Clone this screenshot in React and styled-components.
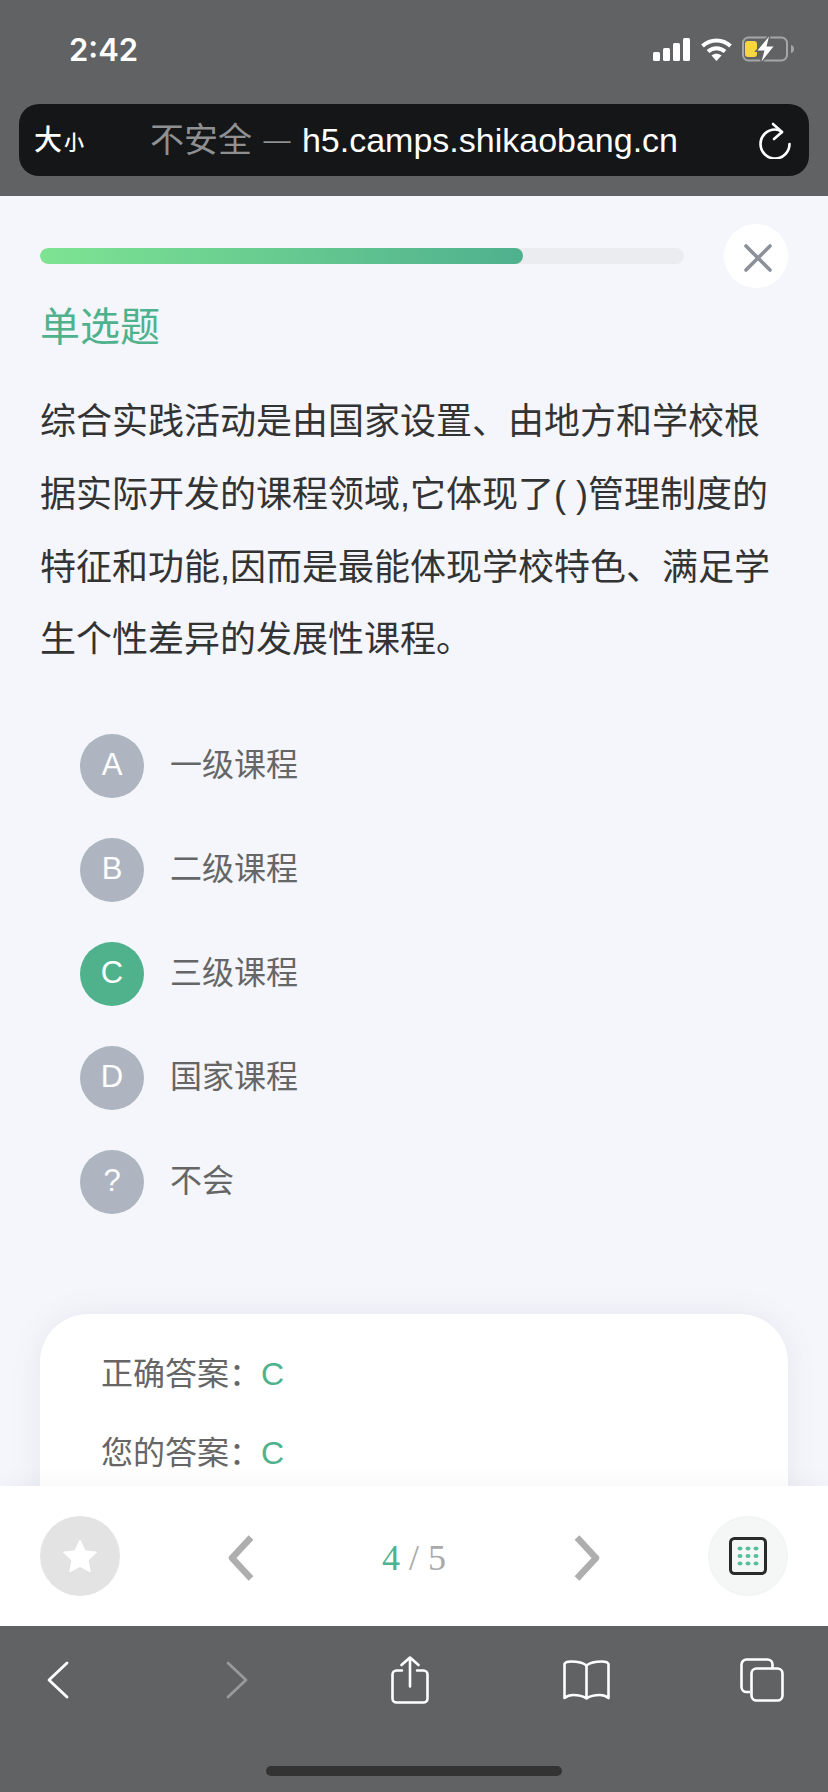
import React from "react";
import styled, { createGlobalStyle } from "styled-components";

const CJK = `"Liberation Sans", "Noto Sans CJK SC", sans-serif`;

const Global = createGlobalStyle`
  html, body { margin: 0; padding: 0; background: #616264; }
  * { box-sizing: border-box; }
`;

const Screen = styled.div`
  width: 828px;
  height: 1792px;
  display: flex;
  flex-direction: column;
  overflow: hidden;
  font-family: ${CJK};
`;

const BrowserTop = styled.header`
  height: 196px;
  flex: none;
  background: #616264;
  padding: 0 19px;
  display: flex;
  flex-direction: column;
`;

const StatusBar = styled.div`
  height: 104px;
  display: flex;
  justify-content: space-between;
  align-items: flex-start;
  padding: 30px 15px 0 50px;
`;

const Clock = styled.span`
  font-family: Inter, sans-serif;
  font-weight: 600;
  font-size: 31px;
  line-height: 38px;
  margin-top: 1px;
  color: #fff;
`;

const StatusIcons = styled.div`
  display: flex;
  align-items: center;
  gap: 10.5px;
  height: 38px;
`;

const AddressBar = styled.div`
  height: 72px;
  border-radius: 20px;
  background: #151618;
  display: flex;
  align-items: center;
  padding: 0 18px 0 15px;
`;

const TextSize = styled.div`
  width: 116px;
  flex: none;
  color: #fff;
  font-size: 28px;
  font-weight: 500;
  padding-bottom: 4px;
  display: flex;
  align-items: baseline;
  & small { font-size: 20px; margin-left: 2px; font-weight: 500; }
`;

const Url = styled.div`
  flex: 1;
  font-size: 34px;
  padding-bottom: 6px;
  color: #fff;
  white-space: nowrap;
`;

const UrlMuted = styled.span`
  color: #8f9092;
`;

const UrlDash = styled.span`
  font-size: 27px;
  margin: 0 2px;
  vertical-align: 3px;
`;

const Page = styled.main`
  flex: 1;
  min-height: 0;
  background: #f4f6fb;
  overflow: hidden;
  padding: 28px 40px 0;
`;

const ProgressRow = styled.div`
  display: flex;
  align-items: center;
  justify-content: space-between;
  height: 64px;
`;

const ProgressTrack = styled.div`
  width: 644px;
  height: 16px;
  border-radius: 8px;
  background: #ebecef;
  overflow: hidden;
`;

const ProgressFill = styled.div`
  height: 100%;
  border-radius: 8px;
  background: linear-gradient(90deg, #7ee492, #4fb08e);
`;

const CloseButton = styled.button`
  width: 64px;
  height: 64px;
  padding: 3px 0 0 4px;
  border: 0;
  border-radius: 50%;
  background: #fff;
  display: flex;
  align-items: center;
  justify-content: center;
`;

const QuestionType = styled.div`
  margin-top: 14px;
  font-size: 40px;
  line-height: 50px;
  color: #4fb28c;
`;

const QuestionText = styled.p`
  margin: 34px 0 0;
  width: 740px;
  font-size: 36px;
  line-height: 72.8px;
  color: #333;
`;

const Options = styled.ul`
  list-style: none;
  margin: 56.800px 0 0;
  padding: 0 0 0 40px;
  display: flex;
  flex-direction: column;
  gap: 40px;
`;

const Option = styled.li`
  height: 64px;
  display: flex;
  align-items: center;
  gap: 26px;
`;

const OptionBadge = styled.span`
  width: 64px;
  height: 64px;
  padding-bottom: 2px;
  border-radius: 50%;
  flex: none;
  display: flex;
  align-items: center;
  justify-content: center;
  color: #fff;
  font-size: 31px;
  background: ${(p) => (p.$active ? "#4fb28c" : "#aeb5c1")};
`;

const OptionText = styled.span`
  font-size: 32px;
  padding-bottom: 7px;
  color: #666;
`;

const AnswerCard = styled.section`
  margin-top: 100px;
  height: 300px;
  background: #fff;
  border-radius: 48px 48px 0 0;
  box-shadow: 0 0 30px rgba(100, 110, 140, 0.1);
  padding: 40px 61px;
  display: flex;
  flex-direction: column;
  gap: 39px;
`;

const AnswerRow = styled.div`
  font-size: 32px;
  line-height: 40px;
  color: #666;
  display: flex;
`;

const AnswerValue = styled.span`
  color: #4fb28c;
`;

const QuizBar = styled.nav`
  position: relative;
  height: 140px;
  flex: none;
  background: #fff;
  padding: 0 40px;
  display: flex;
  align-items: center;
  justify-content: space-between;
  box-shadow: 0 -6px 20px rgba(0, 0, 0, 0.03);
`;

const RoundButton = styled.button`
  width: 80px;
  height: 80px;
  padding: 0;
  border-radius: 50%;
  border: ${(p) => (p.$light ? "1px solid #f0f2f2" : "0")};
  background: ${(p) => (p.$light ? "#f5f6f6" : "#e3e3e3")};
  display: flex;
  align-items: center;
  justify-content: center;
`;

const Pager = styled.div`
  display: flex;
  align-items: center;
  width: 372px;
  margin-top: 3px;
  justify-content: space-between;
`;

const PageCount = styled.div`
  font-family: "Liberation Serif", serif;
  font-size: 36px;
  color: #aaa;
`;

const PageCurrent = styled.span`
  color: #4fb28c;
`;

const BrowserBottom = styled.footer`
  height: 166px;
  flex: none;
  background: #616264;
  position: relative;
  display: flex;
  align-items: flex-start;
  justify-content: space-between;
  padding: 27px 8px 0 0;
`;

const ToolSlot = styled.div`
  width: 116px;
  height: 54px;
  padding-left: ${(p) => p.$inset || 0}px;
  display: flex;
  align-items: center;
  justify-content: center;
`;

const HomeIndicator = styled.div`
  position: absolute;
  left: 266px;
  bottom: 16px;
  width: 296px;
  height: 10px;
  border-radius: 5px;
  background: #333;
`;

const Signal = () => (
  <svg width="37" height="23" viewBox="0 0 37 23" fill="#fff">
    <rect x="0" y="14" width="7" height="9" rx="1.500" />
    <rect x="10" y="10" width="7" height="13" rx="1.500" />
    <rect x="20" y="5" width="7" height="18" rx="1.500" />
    <rect x="30" y="0" width="7" height="23" rx="1.500" />
  </svg>
);

const Wifi = () => (
  <svg width="31" height="23" viewBox="0 0 31 23" fill="none" stroke="#fff" strokeWidth="4">
    <path d="M1.500 8C9.500 .5 21.500 .5 29.500 8" />
    <path d="M7 13.500c5-4.500 12-4.500 17 0" />
    <path d="M15.500 23l-5-5.500c3-2.500 7-2.500 10 0z" fill="#fff" stroke="none" />
  </svg>
);

const Battery = () => (
  <svg width="52" height="26" viewBox="0 0 52 26">
    <rect x="1" y="1.500" width="44" height="23" rx="5.500" fill="none" stroke="#a5a6a7" strokeWidth="2" />
    <path d="M49 9c2 .5 3 2 3 4s-1 3.500-3 4z" fill="#a5a6a7" />
    <rect x="3" y="5" width="12" height="16" rx="3" fill="#f8d63f" />
    <path d="M27 0.500L15.500 14.500h7L19.500 25.500 31.500 10.500h-7z" fill="#fff" stroke="#616264" strokeWidth="3" paintOrder="stroke" />
  </svg>
);

const Reload = () => (
  <svg width="32" height="38" viewBox="0 0 32 38" fill="none" stroke="#fff" strokeWidth="2.600" strokeLinecap="round" strokeLinejoin="round">
    <path d="M30.500 23A14.500 14.500 0 1 1 16 8.500c3 0 5 1 7 2.500" />
    <path d="M14 3l9 8-8 7" />
  </svg>
);

const CloseIcon = () => (
  <svg width="28" height="28" viewBox="0 0 28 28" stroke="#8b9099" strokeWidth="3.600" strokeLinecap="round">
    <path d="M2 2l24 24M26 2L2 26" />
  </svg>
);

const Star = () => (
  <svg width="36" height="34" viewBox="0 0 36 34" fill="#fff">
    <path d="M18 1.500l4.800 10.400 11.400 1.400-8.400 7.800 2.200 11.300L18 27l-10 5.400 2.200-11.300-8.400-7.800 11.400-1.400z" stroke="#fff" strokeWidth="1.500" strokeLinejoin="round" />
  </svg>
);

const Chevron = ({ right }) => (
  <svg width="26" height="46" viewBox="0 0 26 46" fill="none" stroke="#aeaeae" strokeWidth="6.500" strokeLinejoin="round">
    <path d={right ? "M3 2.500L22 23 3 43.500" : "M23 2.500L4 23l19 20.500"} />
  </svg>
);

const GridIcon = () => {
  const dots = [];
  for (let r = 0; r < 3; r += 1) {
    for (let c = 0; c < 3; c += 1) {
      dots.push(<ellipse key={`${r}${c}`} cx={11 + c * 8} cy={11.500 + r * 7.500} rx="2.500" ry="2" fill="#56c09a" />);
    }
  }
  return (
    <svg width="38" height="38" viewBox="0 0 38 38">
      <rect x="1.500" y="1.500" width="35" height="35" rx="4" fill="#f5f6f6" stroke="#2a2a2a" strokeWidth="3" />
      {dots}
    </svg>
  );
};

const BackIcon = ({ right, dim }) => (
  <svg width="22" height="38" viewBox="0 0 22 38" fill="none" stroke={dim ? "#98999a" : "#fff"} strokeWidth="2.800" strokeLinecap="round" strokeLinejoin="round">
    <path d={right ? "M2 2l18 17L2 36" : "M20 2L2 19l18 17"} />
  </svg>
);

const ShareIcon = () => (
  <svg width="38" height="48" viewBox="0 0 38 48" fill="none" stroke="#fff" strokeWidth="2.600" strokeLinecap="round" strokeLinejoin="round">
    <path d="M11 14.500H5.500a4 4 0 0 0-4 4v24a4 4 0 0 0 4 4h27a4 4 0 0 0 4-4v-24a4 4 0 0 0-4-4H26" />
    <path d="M19 30.500V1.500M10.500 9L19 1.500 27.500 9" />
  </svg>
);

const BookIcon = () => (
  <svg width="47" height="40" viewBox="0 0 47 40" fill="none" stroke="#fff" strokeWidth="2.600" strokeLinejoin="round">
    <path d="M23.500 5.500C20 2.500 15 1.500 8 1.500 5 1.500 2 2.500 1.500 4v34C4 36 7 35 10 35c5 0 10 1 13.500 3.500C27 36 32 35 37 35c3 0 6 1 8.500 3V4C45 2.500 42 1.500 39 1.500 32 1.500 27 2.500 23.500 5.500z" />
    <path d="M23.500 5.500v33" />
  </svg>
);

const TabsIcon = () => (
  <svg width="44" height="44" viewBox="0 0 44 44" fill="none" stroke="#fff" strokeWidth="2.600">
    <path d="M10 34H6.500a5 5 0 0 1-5-5V6.500a5 5 0 0 1 5-5h21a5 5 0 0 1 5 5V10" />
    <rect x="11.500" y="10.500" width="31" height="32" rx="5" />
  </svg>
);

const options = [
  ["A", "一级课程"],
  ["B", "二级课程"],
  ["C", "三级课程", true],
  ["D", "国家课程"],
  ["?", "不会"],
];

export default function App() {
  return (
    <Screen>
      <Global />
      <BrowserTop>
        <StatusBar>
          <Clock>2:42</Clock>
          <StatusIcons>
            <Signal />
            <Wifi />
            <Battery />
          </StatusIcons>
        </StatusBar>
        <AddressBar>
          <TextSize>大<small>小</small></TextSize>
          <Url><UrlMuted>不安全 <UrlDash>—</UrlDash> </UrlMuted>h5.camps.shikaobang.cn</Url>
          <Reload />
        </AddressBar>
      </BrowserTop>
      <Page>
        <ProgressRow>
          <ProgressTrack>
            <ProgressFill style={{ width: "75%" }} />
          </ProgressTrack>
          <CloseButton><CloseIcon /></CloseButton>
        </ProgressRow>
        <QuestionType>单选题</QuestionType>
        <QuestionText>综合实践活动是由国家设置、由地方和学校根据实际开发的课程领域,它体现了( )管理制度的特征和功能,因而是最能体现学校特色、满足学生个性差异的发展性课程。</QuestionText>
        <Options>
          {options.map(([key, label, active]) => (
            <Option key={key}>
              <OptionBadge $active={active}>{key}</OptionBadge>
              <OptionText>{label}</OptionText>
            </Option>
          ))}
        </Options>
        <AnswerCard>
          <AnswerRow>正确答案：<AnswerValue>C</AnswerValue></AnswerRow>
          <AnswerRow>您的答案：<AnswerValue>C</AnswerValue></AnswerRow>
        </AnswerCard>
      </Page>
      <QuizBar>
        <RoundButton><Star /></RoundButton>
        <Pager>
          <Chevron />
          <PageCount><PageCurrent>4</PageCurrent> / 5</PageCount>
          <Chevron right />
        </Pager>
        <RoundButton $light><GridIcon /></RoundButton>
      </QuizBar>
      <BrowserBottom>
        <ToolSlot><BackIcon /></ToolSlot>
        <ToolSlot $inset={6}><BackIcon right dim /></ToolSlot>
        <ToolSlot><ShareIcon /></ToolSlot>
        <ToolSlot><BookIcon /></ToolSlot>
        <ToolSlot><TabsIcon /></ToolSlot>
        <HomeIndicator />
      </BrowserBottom>
    </Screen>
  );
}
